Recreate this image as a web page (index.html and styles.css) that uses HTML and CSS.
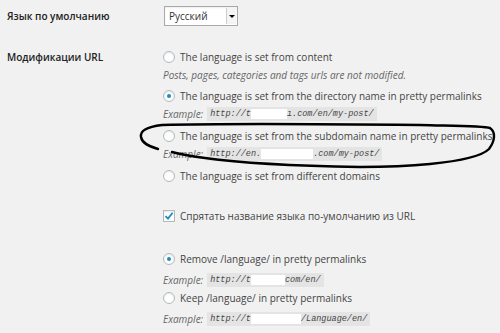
FILE: index.html
```html
<!DOCTYPE html>
<html>
  <head>
    <meta charset="utf-8" />
    <title>Настройки языка</title>
    <link rel="stylesheet" href="styles.css">
  </head>
  <body>
    <div class="settings">
      <div class="row row-lang">
        <div class="row-label">Язык по умолчанию</div>
        <div class="row-field">
          <div class="select">
            <span class="select-value">Русский</span>
            <span class="select-arrow"></span>
          </div>
        </div>
      </div>

      <div class="row row-url">
        <div class="row-label">Модификации URL</div>
        <div class="row-field">
          <div class="option">
            <span class="radio"></span>The language is set from content
          </div>
          <div class="description">Posts, pages, categories and tags urls are not modified.</div>

          <div class="option option-gap">
            <span class="radio checked"></span>The language is set from the directory name in pretty permalinks
          </div>
          <div class="description">
            Example: <code>http://t<span class="blur" style="width:36px"></span>ı.com/en/my-post/</code>
          </div>

          <div class="option option-gap">
            <span class="radio"></span>The language is set from the subdomain name in pretty permalinks
          </div>
          <div class="description">
            Example: <code>http://en.<span class="blur" style="width:52px"></span>.com/my-post/</code>
          </div>

          <div class="option option-gap">
            <span class="radio"></span>The language is set from different domains
          </div>
        </div>
      </div>

      <div class="row row-hide">
        <div class="row-label"></div>
        <div class="row-field">
          <div class="option">
            <span class="checkbox">
              <svg width="10" height="10" viewBox="0 0 10 10">
                <path d="M1.5 5.2 L4 7.6 L8.6 1.8" fill="none" stroke="#1e8cbe" stroke-width="1.8" />
              </svg>
            </span>Спрятать название языка по-умолчанию из URL
          </div>
        </div>
      </div>

      <div class="row row-keep">
        <div class="row-label"></div>
        <div class="row-field">
          <div class="option">
            <span class="radio checked"></span>Remove /language/ in pretty permalinks
          </div>
          <div class="description example-gap">
            Example: <code>http://t<span class="blur" style="width:34px"></span>com/en/</code>
          </div>
          <div class="option">
            <span class="radio"></span>Keep /language/ in pretty permalinks
          </div>
          <div class="description example-gap">
            Example: <code>http://t<span class="blur" style="width:50px"></span>/Language/en/</code>
          </div>
        </div>
      </div>
    </div>

    <svg class="scribble" width="500" height="333" viewBox="0 0 500 333">
      <path d="M158 149 C148 146 142 143 141 137 C140 131 146 127 162 125 C230 123 330 124 420 125 C460 126 484 126 490 128 C496 132 495 141 489 149 C482 156 460 161 430 164 C400 167 380 167 360 167 C300 166 240 163 205 158 C190 156 180 154 172 152"
        fill="none" stroke="#000" stroke-width="2.4" stroke-linecap="round" />
    </svg>
  </body>
</html>
```

FILE: styles.css
```css
body {
  margin: 0;
  background: #f1f1f1;
  color: #444;
  font-family: "Open Sans", Arial, sans-serif;
  font-size: 10px;
  position: relative;
}
.settings {
  padding-left: 7px;
}
.row {
  display: flex;
}
.row-label {
  width: 156px;
  flex: none;
  color: #222;
  font-weight: 600;
  line-height: 18px;
}
.row-field {
  flex: 1;
}

/* rows */
.row-lang {
  padding-top: 6px;
}
.row-lang .row-label {
  line-height: 20px;
}
.row-url {
  padding-top: 22px;
}
.row-hide {
  padding-top: 22px;
}
.row-keep {
  padding-top: 25px;
}

/* select */
.select {
  display: flex;
  align-items: center;
  width: 72px;
  height: 18px;
  margin-left: 1px;
  background: #fff;
  border: 1px solid #a9a9a9;
  box-shadow: inset 0 1px 2px rgba(0, 0, 0, 0.07);
}
.select-value {
  flex: 1;
  padding-left: 4px;
  color: #333;
}
.select-arrow {
  width: 9px;
  height: 16px;
  margin-right: 1px;
  border-left: 1px solid #ccc;
  background: #f4f4f4;
  position: relative;
}
.select-arrow::after {
  content: "";
  position: absolute;
  left: 2px;
  top: 7px;
  border-left: 3px solid transparent;
  border-right: 3px solid transparent;
  border-top: 3px solid #000;
}

/* options */
.option {
  display: flex;
  align-items: center;
  height: 18px;
  white-space: nowrap;
}
.option-gap {
  margin-top: 3px;
}
.option-gap + .description + .option-gap {
  margin-top: 4px;
}
.radio,
.checkbox {
  width: 10px;
  height: 10px;
  flex: none;
  margin-right: 5px;
  background: #fff;
  border: 1px solid #b4b9be;
  box-shadow: inset 0 1px 2px rgba(0, 0, 0, 0.1);
  display: flex;
  align-items: center;
  justify-content: center;
}
.radio {
  border-radius: 50%;
}
.radio.checked::after {
  content: "";
  width: 4px;
  height: 4px;
  border-radius: 50%;
  background: #1e8cbe;
}
.checkbox svg {
  display: block;
}

.description {
  height: 18px;
  display: flex;
  align-items: center;
  color: #666;
  font-style: italic;
  white-space: nowrap;
}
.example-gap {
  margin-top: 3px;
}
.description code {
  margin-left: 4px;
  padding: 1px 3px;
  background: #e4e4e4;
  font-family: "Liberation Mono", monospace;
  font-size: 8.5px;
  line-height: 12px;
  color: #444;
  display: flex;
  align-items: center;
}
.blur {
  display: inline-block;
  height: 10px;
  background: #fff;
}

.scribble {
  position: absolute;
  top: 0;
  left: 0;
  pointer-events: none;
}
```
